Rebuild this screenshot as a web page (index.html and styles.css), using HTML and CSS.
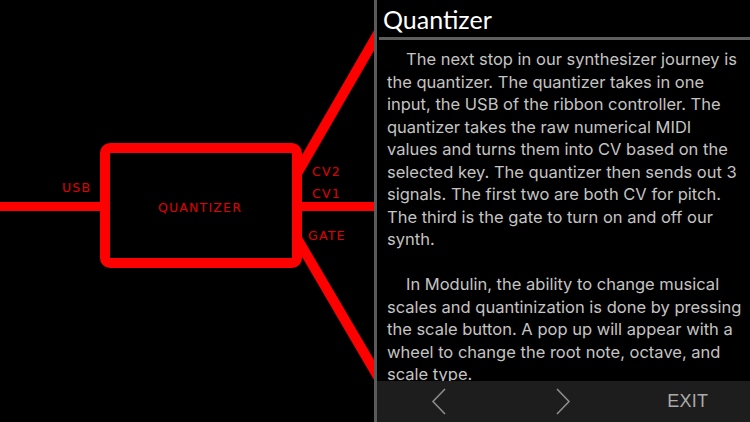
FILE: index.html
```html
<!DOCTYPE html>
<html>
<head>
<meta charset="utf-8">
<link rel="stylesheet" href="styles.css">
</head>
<body>
<div class="screen">
  <div class="diagram">
    <svg class="diagram-svg" width="374" height="422" viewBox="0 0 374 422">
      <g stroke="#ff0000" fill="none">
        <line x1="0" y1="206.5" x2="104" y2="206.5" stroke-width="9"/>
        <rect x="105" y="148" width="192" height="115" rx="5" stroke-width="10"/>
        <line x1="296" y1="206.5" x2="374" y2="206.5" stroke-width="9"/>
        <line x1="298" y1="172" x2="380" y2="30" stroke-width="10"/>
        <line x1="298" y1="240" x2="380" y2="380" stroke-width="10"/>
      </g>
      <g class="labels" fill="#e00000">
        <text x="62" y="192">USB</text>
        <text x="200" y="212" text-anchor="middle">QUANTIZER</text>
        <text x="312" y="176">CV2</text>
        <text x="312" y="198">CV1</text>
        <text x="308" y="240">GATE</text>
      </g>
    </svg>
  </div>
  <div class="panel">
    <div class="panel-head">
      <h1 class="title">Quantizer</h1>
    </div>
    <div class="panel-body">
      <p class="para">The next stop in our synthesizer journey is<br>the quantizer. The quantizer takes in one<br>input, the USB of the ribbon controller. The<br>quantizer takes the raw numerical MIDI<br>values and turns them into CV based on the<br>selected key. The quantizer then sends out 3<br>signals. The first two are both CV for pitch.<br>The third is the gate to turn on and off our<br>synth.</p>
      <p class="para">In Modulin, the ability to change musical<br>scales and quantinization is done by pressing<br>the scale button. A pop up will appear with a<br>wheel to change the root note, octave, and<br>scale type.</p>
    </div>
    <div class="toolbar">
      <div class="tool">
        <svg width="16" height="27" viewBox="0 0 16 27"><polyline points="14,1 2,13.5 14,26" fill="none" stroke="#8c8c8c" stroke-width="1.6"/></svg>
      </div>
      <div class="tool">
        <svg width="16" height="27" viewBox="0 0 16 27"><polyline points="2,1 14,13.5 2,26" fill="none" stroke="#8c8c8c" stroke-width="1.6"/></svg>
      </div>
      <div class="tool exit">EXIT</div>
    </div>
  </div>
</div>
</body>
</html>
```
FILE: styles.css
```css
html, body {
  margin: 0;
  padding: 0;
  background: #000;
}
.screen {
  width: 750px;
  height: 422px;
  display: flex;
  background: #000;
  overflow: hidden;
}
.diagram {
  width: 374px;
  height: 422px;
  flex: none;
}
.diagram-svg {
  display: block;
}
.labels text {
  font-family: "DejaVu Sans", sans-serif;
  font-size: 12.5px;
  letter-spacing: 1.2px;
}
.panel {
  flex: 1;
  display: flex;
  flex-direction: column;
  border-left: 3px solid #5a5a5a;
  min-width: 0;
}
.panel-head {
  padding: 0 0 0 2px;
}
.title {
  margin: 0;
  padding: 6px 0 4px 4px;
  height: 27px;
  font-family: "Lato", sans-serif;
  font-weight: 400;
  font-size: 25px;
  line-height: 27px;
  color: #fff;
  border-bottom: 3px solid #5e5e5e;
}
.panel-body {
  flex: 1;
  overflow: hidden;
  padding: 8px 0 0 10px;
  min-height: 0;
}
.para {
  margin: 0 0 22.5px 0;
  font-family: "Inter", "Liberation Sans", sans-serif;
  font-size: 16.5px;
  line-height: 22.5px;
  color: #c4c4c4;
  white-space: nowrap;
  text-indent: 19px;
}
.toolbar {
  height: 41px;
  flex: none;
  display: flex;
  background: #1d1d1d;
}
.tool {
  flex: 1;
  display: flex;
  align-items: center;
  justify-content: center;
}
.tool svg {
  display: block;
}
.exit {
  font-family: "Liberation Sans", sans-serif;
  font-size: 18px;
  color: #ababab;
  letter-spacing: 0.3px;
}
```
